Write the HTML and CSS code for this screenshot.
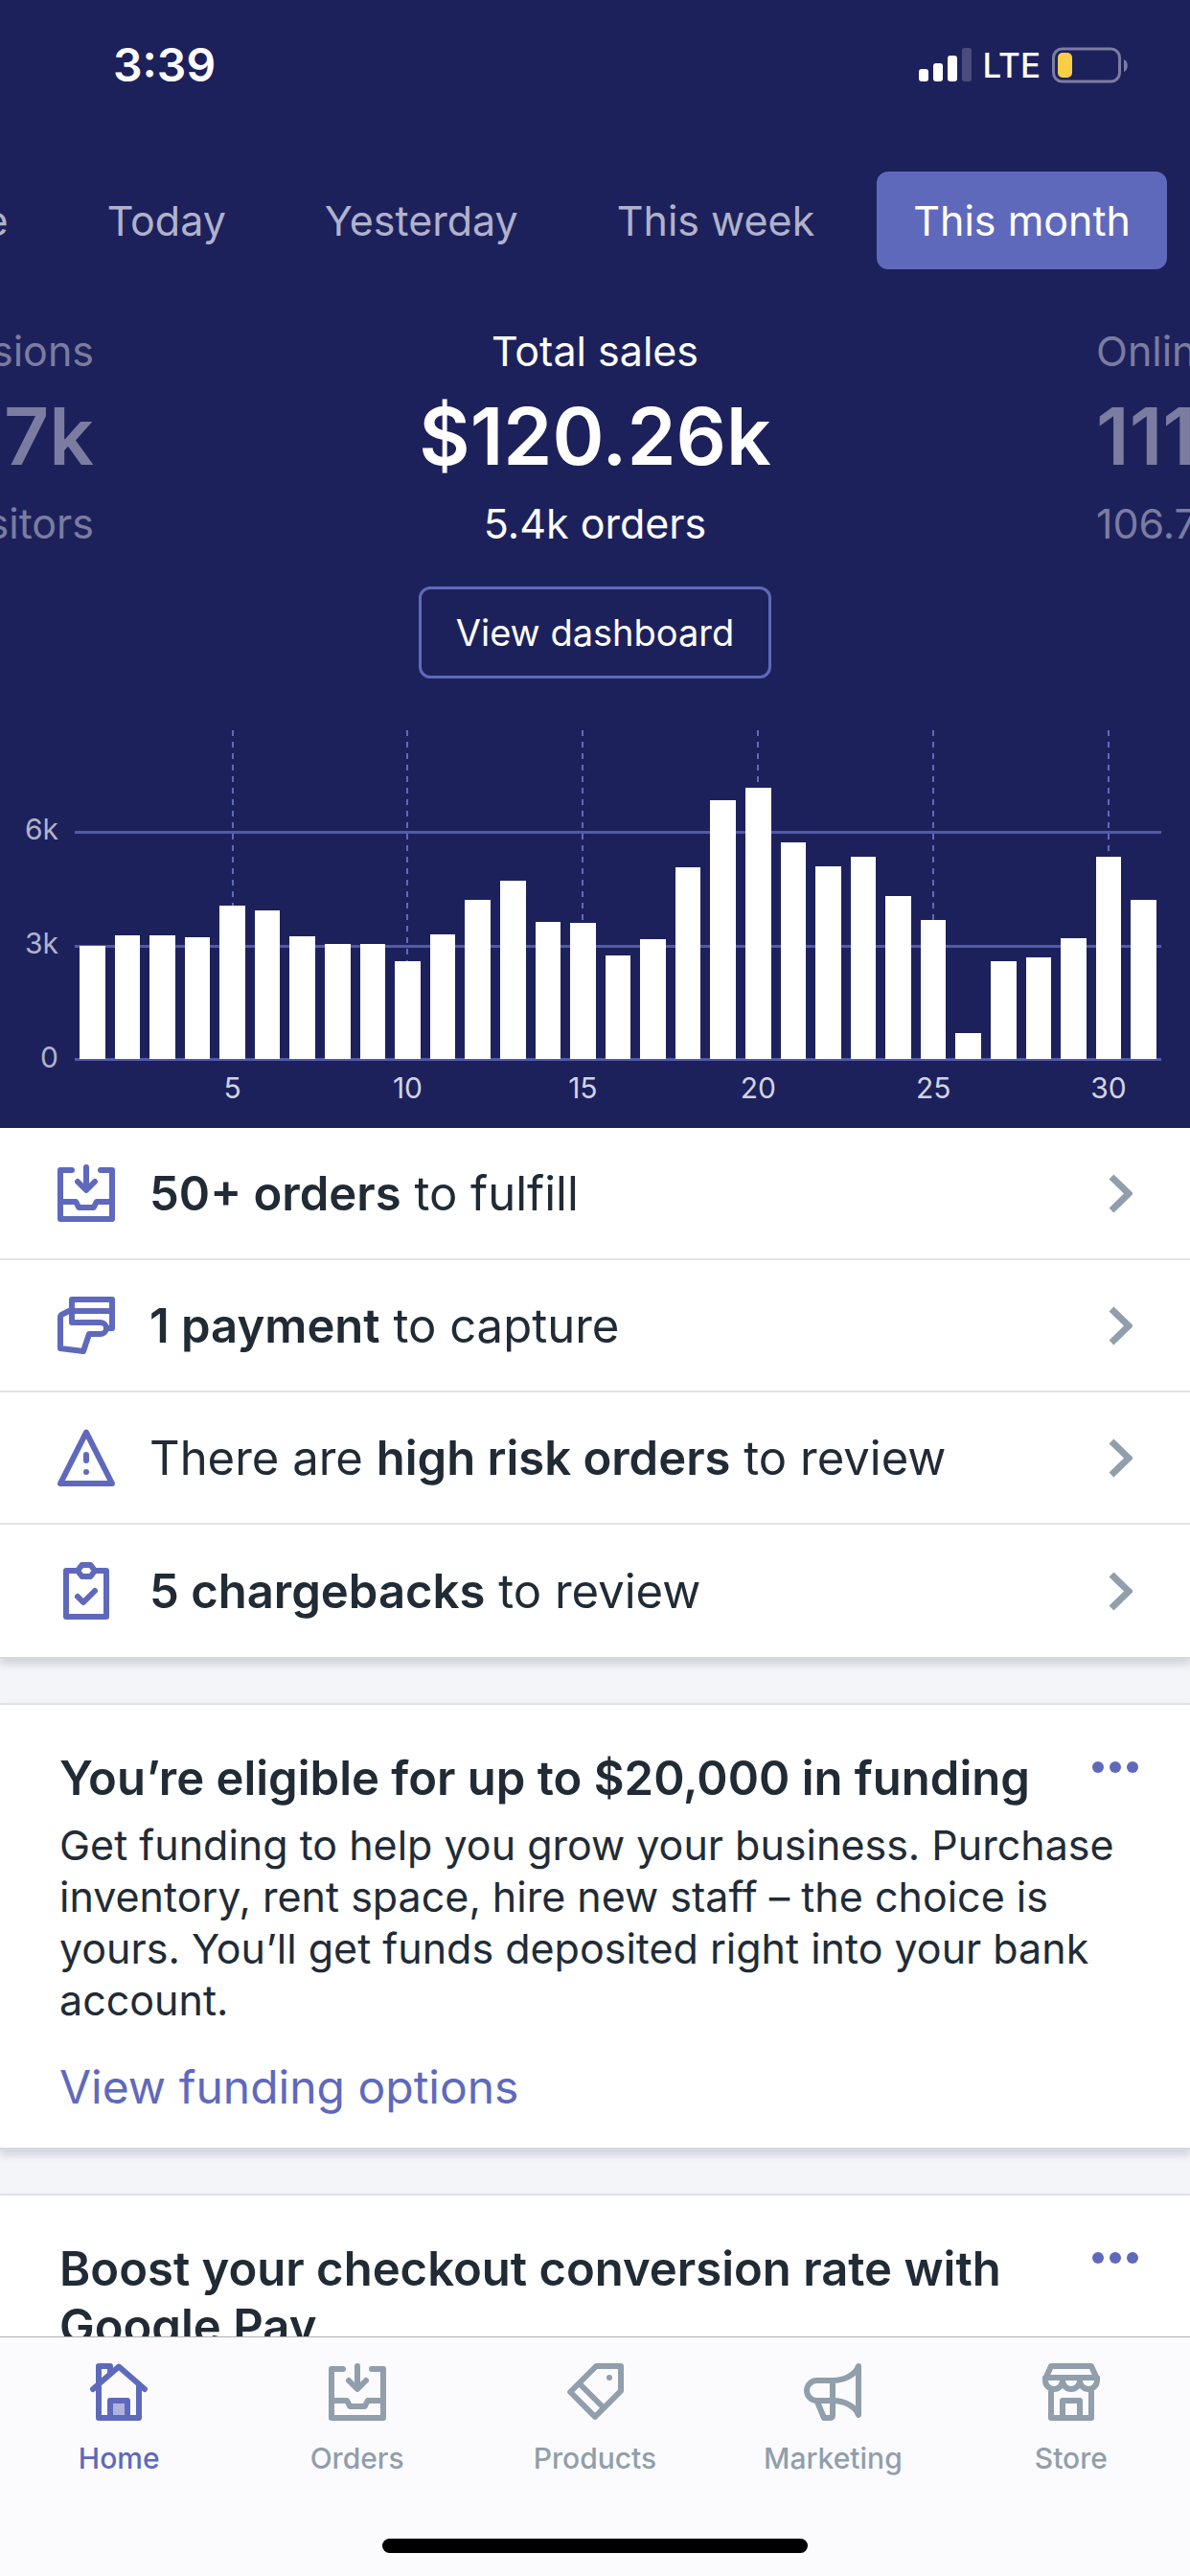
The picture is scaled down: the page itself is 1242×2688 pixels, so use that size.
FILE: index.html
```html
<!DOCTYPE html>
<html lang="en">
<head>
    <meta charset="UTF-8">
    <meta name="viewport" content="width=device-width, initial-scale=1.0">
    <title>Home</title>
    <link rel="stylesheet" href="styles.css">
</head>
<body>
    <div class="app">
        <main class="content">
            <header class="summary">
                <div class="status">
                    <span class="clock">3:39</span>
                    <div class="status-icons">
                        <svg class="signal" viewBox="0 0 55 36" aria-hidden="true">
                            <rect x="0" y="22" width="10" height="13" rx="3"/>
                            <rect x="15" y="16" width="10" height="19" rx="3"/>
                            <rect x="30" y="8" width="10" height="27" rx="3"/>
                            <rect x="45" y="0" width="10" height="35" rx="3" opacity="0.2"/>
                        </svg>
                        <span class="network">LTE</span>
                        <svg class="battery" viewBox="0 0 80 38" aria-hidden="true">
                            <rect x="1.5" y="2" width="69" height="34" rx="9" fill="none" stroke="#7b7ca3" stroke-width="3"/>
                            <rect x="6" y="6" width="15" height="26" rx="5" fill="#f7ce46"/>
                            <path d="M75 13c5 2 5 11 0 13z" fill="#7b7ca3"/>
                        </svg>
                    </div>
                </div>

                <nav class="periods">
                    <button type="button">Live</button>
                    <button type="button">Today</button>
                    <button type="button">Yesterday</button>
                    <button type="button">This week</button>
                    <button type="button" class="active">This month</button>
                </nav>

                <div class="metrics">
                    <section class="metric previous">
                        <p>Total sessions</p>
                        <strong>67k</strong>
                        <p>visitors</p>
                    </section>
                    <section class="metric current">
                        <p>Total sales</p>
                        <strong>$120.26k</strong>
                        <p>5.4k orders</p>
                    </section>
                    <section class="metric next">
                        <p>Online store</p>
                        <strong>111.2k</strong>
                        <p>106.7k</p>
                    </section>
                </div>

                <button type="button" class="dashboard">View dashboard</button>

                <div class="chart">
                    <div class="y-axis">
                        <span>6k</span>
                        <span>3k</span>
                        <span>0</span>
                    </div>
                    <div class="plot-area">
                        <div class="plot" id="plot"></div>
                        <div class="x-axis" id="xAxis"></div>
                    </div>
                </div>
            </header>

            <ul class="tasks">
                <li>
                    <a href="#orders">
                        <svg class="icon" viewBox="0 0 20 20"><path d="M5 2H1v17h18V2h-4M10 1v7.500M7 6l3 3 3-3M1 13h5.400l1 2h5.200l1-2H19"/></svg>
                        <span class="task-text"><b>50+ orders</b> to fulfill</span>
                        <svg class="chevron" viewBox="0 0 25 41"><path d="M3 3l18 17.500L3 38"/></svg>
                    </a>
                </li>
                <li>
                    <a href="#payments">
                        <svg class="icon" viewBox="0 0 20 20"><path d="M5 9V1h14v10h-1M5 5h14M5 4.500L2 6Q1 6.400 1 7v11l8 1 2-6h4a2 2 0 0 0 0-4H5"/></svg>
                        <span class="task-text"><b>1 payment</b> to capture</span>
                        <svg class="chevron" viewBox="0 0 25 41"><path d="M3 3l18 17.500L3 38"/></svg>
                    </a>
                </li>
                <li>
                    <a href="#risk">
                        <svg class="icon" viewBox="0 0 20 20"><path d="M10 1.200L1 19h18zM10 9v2M10 15v.010"/></svg>
                        <span class="task-text">There are <b>high risk orders</b> to review</span>
                        <svg class="chevron" viewBox="0 0 25 41"><path d="M3 3l18 17.500L3 38"/></svg>
                    </a>
                </li>
                <li>
                    <a href="#chargebacks">
                        <svg class="icon" viewBox="0 0 20 20"><path d="M7 3H3v16h14V3h-4M8.500 1h3L13 3l-1.500 2h-3L7 3zM7 12l2 2 4-4"/></svg>
                        <span class="task-text"><b>5 chargebacks</b> to review</span>
                        <svg class="chevron" viewBox="0 0 25 41"><path d="M3 3l18 17.500L3 38"/></svg>
                    </a>
                </li>
            </ul>

            <article class="card">
                <div class="card-header">
                    <h2>You’re eligible for up to $20,000 in funding</h2>
                    <button type="button" class="more" aria-label="More">
                        <svg viewBox="0 0 48 12"><circle cx="6" cy="6" r="6"/><circle cx="24" cy="6" r="6"/><circle cx="42" cy="6" r="6"/></svg>
                    </button>
                </div>
                <p>Get funding to help you grow your business. Purchase inventory, rent space, hire new staff – the choice is yours. You’ll get funds deposited right into your bank account.</p>
                <a href="#funding">View funding options</a>
            </article>

            <article class="card">
                <div class="card-header">
                    <h2>Boost your checkout conversion rate with Google Pay</h2>
                    <button type="button" class="more" aria-label="More">
                        <svg viewBox="0 0 48 12"><circle cx="6" cy="6" r="6"/><circle cx="24" cy="6" r="6"/><circle cx="42" cy="6" r="6"/></svg>
                    </button>
                </div>
            </article>
        </main>

        <footer class="bottom">
            <nav class="tabs">
                <a href="#home" class="active">
                    <svg class="icon" viewBox="0 0 20 20">
                        <rect x="8" y="14" width="4" height="4" fill="#b0b3dd" stroke="none"/>
                        <path d="M3 7.500V1h4v2M3 8v11h14V8M1 9l9-7.800L19 9M7 19v-6h6v6"/>
                    </svg>
                    Home
                </a>
                <a href="#orders">
                    <svg class="icon" viewBox="0 0 20 20"><path d="M5 2H1v17h18V2h-4M10 1v7.500M7 6l3 3 3-3M1 13h5.400l1 2h5.200l1-2H19"/></svg>
                    Orders
                </a>
                <a href="#products">
                    <svg class="icon" viewBox="0 0 20 20"><path d="M10.400 1H19v8.600l-9 9L1.400 10zM4.500 7l8.500 8.500M15 5v.010"/></svg>
                    Products
                </a>
                <a href="#marketing">
                    <svg class="icon" viewBox="0 0 20 20"><path d="M10 6H4.500a3.500 3.500 0 0 0 0 7H10c4 0 8 2 9 5V1c-1 3-5 5-9 5v12q0 1-1 1H7l-2.500-6"/></svg>
                    Marketing
                </a>
                <a href="#store">
                    <svg class="icon" viewBox="0 0 20 20"><path d="M1 5.500L3 1h14l2 4.500M1 5h18M1 5v1a3 3 0 0 0 6 0 3 3 0 0 0 6 0 3 3 0 0 0 6 0V5M3 9v10h14V9M7 19v-6h6v6"/></svg>
                    Store
                </a>
            </nav>
            <div class="home-bar"></div>
        </footer>
    </div>

    <script>
        const sales = [
            2990, 3270, 3280, 3210, 4050, 3920, 3240, 3040, 3040, 2600,
            3290, 4220, 4730, 3640, 3600, 2740, 3170, 5070, 6840, 7190,
            5740, 5110, 5340, 4310, 3670, 680, 2580, 2700, 3190, 5360, 4220
        ];
        const maxValue = 8700;
        const plot = document.getElementById('plot');
        const xAxis = document.getElementById('xAxis');

        // horizontal lines at 0, 3k and 6k
        [0, 3000, 6000].forEach(value => {
            const line = document.createElement('div');
            line.className = 'grid-line';
            line.style.bottom = `${value / maxValue * 100}%`;
            plot.appendChild(line);
        });

        sales.forEach((value, index) => {
            const day = index + 1;
            const column = document.createElement('div');
            const bar = document.createElement('div');
            const label = document.createElement('span');
            column.className = day % 5 === 0 ? 'column marked' : 'column';
            bar.className = 'bar';
            bar.style.height = `${value / maxValue * 100}%`;
            label.textContent = day % 5 === 0 ? day : '';
            column.appendChild(bar);
            plot.appendChild(column);
            xAxis.appendChild(label);
        });
    </script>
</body>
</html>
```

FILE: styles.css
```css
* {
    box-sizing: border-box;
}
body {
    margin: 0;
    font-family: Inter, "Liberation Sans", sans-serif;
    font-size: 43px;
    color: #212b36;
    background: #f4f5f8;
}
button {
    font: inherit;
    color: inherit;
    background: none;
    border: none;
    padding: 0;
    cursor: pointer;
}
a {
    color: inherit;
    text-decoration: none;
}
p, h2, ul {
    margin: 0;
    padding: 0;
}
.app {
    display: flex;
    flex-direction: column;
    height: 100vh;
}
.content {
    flex: 1;
    min-height: 0;
    overflow: hidden;
}

/* Summary */
.summary {
    display: flex;
    flex-direction: column;
    padding-bottom: 24px;
    color: #fff;
    background: #1d215b;
}
.status {
    display: flex;
    justify-content: space-between;
    align-items: center;
    height: 135px;
    padding: 0 64px 0 118px;
}
.clock {
    font-size: 48px;
    font-weight: 600;
}
.status-icons {
    display: flex;
    align-items: center;
    gap: 12px;
}
.signal {
    width: 55px;
    height: 36px;
    fill: #fff;
}
.network {
    font-size: 35px;
    font-weight: 500;
}
.battery {
    width: 80px;
    height: 38px;
}
.periods {
    display: flex;
    justify-content: flex-end;
    gap: 27px;
    margin-top: 44px;
    padding-right: 24px;
    overflow: hidden;
}
.periods button {
    flex: none;
    height: 102px;
    padding: 0 38px;
    color: #b0b2cb;
    border-radius: 12px;
}
.periods .active {
    color: #fff;
    background: #5f69bc;
}
.metrics {
    display: flex;
    justify-content: center;
    margin-top: 58px;
    overflow: hidden;
}
.metric {
    flex: none;
    display: flex;
    flex-direction: column;
    gap: 15px;
    width: calc(100% - 196px);
    text-align: center;
    line-height: 54px;
}
.metric strong {
    font-size: 82px;
    font-weight: 600;
    line-height: 96px;
}
.previous, .next {
    color: #7b7ca0;
}
.previous {
    text-align: right;
}
.next {
    text-align: left;
}
.dashboard {
    align-self: center;
    height: 96px;
    margin-top: 39px;
    padding: 0 36px;
    font-size: 38px;
    border: 3px solid #5f69bc;
    border-radius: 12px;
}

/* Chart */
.chart {
    display: flex;
    gap: 17px;
    margin-top: 54px;
    padding-right: 30px;
    font-size: 30px;
}
.y-axis {
    display: flex;
    flex-direction: column;
    align-items: flex-end;
    gap: 83px;
    width: 61px;
    padding-top: 85px;
    line-height: 36px;
    color: #b0b2cb;
}
.plot-area {
    flex: 1;
}
.plot {
    position: relative;
    display: flex;
    height: 343px;
}
.grid-line {
    position: absolute;
    left: 0;
    right: 0;
    height: 3px;
    margin-bottom: -2px;
    background: #525aa9;
}
.column {
    position: relative;
    flex: 1;
    display: flex;
    align-items: flex-end;
    padding: 0 5px;
}
.marked {
    background: linear-gradient(#5f69bc 50%, transparent 50%) center top / 2px 12px repeat-y;
}
.bar {
    width: 100%;
    background: #fff;
}
.x-axis {
    display: flex;
    margin-top: 12px;
    line-height: 36px;
    color: #d2d3e4;
}
.x-axis span {
    display: flex;
    justify-content: center;
    flex: 1;
    width: 0;
}

/* Tasks */
.icon {
    flex: none;
    width: 60px;
    height: 60px;
    fill: none;
    stroke: currentColor;
    stroke-width: 2;
    stroke-linecap: round;
    stroke-linejoin: round;
}
.tasks, .card {
    background: #fff;
    border-bottom: 2px solid #d3d9e0;
    box-shadow: 0 6px 8px rgba(33, 43, 80, 0.16);
}
.tasks {
    list-style: none;
}
.tasks a {
    display: flex;
    align-items: center;
    height: 138px;
    padding: 0 60px;
    color: #5f69bc;
    border-bottom: 2px solid #dfe3e8;
}
.tasks li:last-child a {
    border-bottom: none;
}
.task-text {
    flex: 1;
    margin-left: 36px;
    font-size: 49px;
    color: #212b36;
}
.task-text b {
    font-weight: 600;
}
.chevron {
    width: 25px;
    height: 41px;
    fill: none;
    stroke: #919eab;
    stroke-width: 7;
}

/* Cards */
.card {
    margin-top: 46px;
    padding: 47px 54px 33px 62px;
    border-top: 2px solid #dfe3e8;
}
.card-header {
    display: flex;
    justify-content: space-between;
    align-items: flex-start;
}
.card h2 {
    font-size: 49px;
    font-weight: 600;
    line-height: 60px;
}
.more {
    display: flex;
    align-items: center;
    flex: none;
    height: 36px;
}
.more svg {
    width: 48px;
    height: 12px;
    fill: #5f69bc;
}
.card p {
    margin-top: 12px;
    line-height: 54px;
}
.card > a {
    display: block;
    margin-top: 34px;
    font-size: 48px;
    line-height: 60px;
    color: #5f69bc;
}

/* Bottom navigation */
.bottom {
    position: relative;
    flex: none;
    display: flex;
    flex-direction: column;
    align-items: center;
    justify-content: space-between;
    height: 250px;
    padding: 27px 0 24px;
    background: #fbfbfd;
    border-top: 1px solid #b0b1b5;
}
.tabs {
    display: flex;
    width: 100%;
}
.tabs a {
    flex: 1;
    display: flex;
    flex-direction: column;
    align-items: center;
    gap: 21px;
    font-size: 30px;
    font-weight: 500;
    line-height: 36px;
    color: #919eab;
}
.tabs .active {
    color: #5f69bc;
}
.home-bar {
    width: 444px;
    height: 15px;
    border-radius: 8px;
    background: #000;
}
```
